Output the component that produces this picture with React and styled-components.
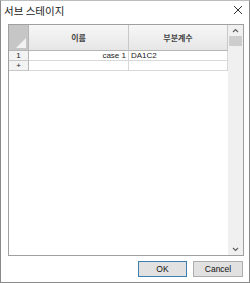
import React from 'react';
import styled, { createGlobalStyle } from 'styled-components';

const Global = createGlobalStyle`
  html, body { margin: 0; padding: 0; background: #fff; }
  body { font-family: "Noto Sans CJK KR", "Noto Sans", sans-serif; }
`;

const Dialog = styled.div`
  width: 250px;
  height: 283px;
  box-sizing: border-box;
  border: 1px solid #8a8a8a;
  border-top-color: #bdbdbd;
  display: flex;
  flex-direction: column;
  background: #fff;
`;

const TitleBar = styled.div`
  height: 20px;
  display: flex;
  align-items: center;
  justify-content: space-between;
  padding: 0 6px 0 3px;
  font-size: 10.5px;
  color: #222;
`;

const Body = styled.div`
  flex: 1;
  display: flex;
  flex-direction: column;
  padding: 5px 5px 5px 7px;
`;

const GridBox = styled.div`
  height: 230px;
  border: 1px solid #a0a0a0;
  display: flex;
  background: #fff;
`;

const Table = styled.div`
  flex: 1;
  display: flex;
  flex-direction: column;
`;

const Row = styled.div`
  display: grid;
  grid-template-columns: 20px 100px 1fr;
  height: ${p => p.$h}px;
`;

const HeadCell = styled.div`
  display: flex;
  align-items: center;
  justify-content: center;
  background: linear-gradient(#f7f7f7, #e6e6e6);
  border-right: 1px solid #c8c8c8;
  border-bottom: 1px solid #b5b5b5;
  font-size: 8px;
  font-weight: bold;
  color: #444;
  position: relative;
`;

const Corner = styled(HeadCell)`
  background: #c6c6c6;
  border-right: 1px solid #b5b5b5;
`;

const Tri = styled.div`
  position: absolute;
  right: 2px;
  bottom: 2px;
  width: 0;
  height: 0;
  border-left: 10px solid transparent;
  border-bottom: 10px solid #f2f2f2;
`;

const Cell = styled.div`
  display: flex;
  align-items: center;
  justify-content: ${p => p.$align || 'flex-start'};
  padding: 0 2px;
  border-right: 1px solid #d8d8d8;
  border-bottom: 1px solid #d8d8d8;
  font-family: "Liberation Sans", Arial, sans-serif;
  font-size: 8px;
  color: #222;
`;

const RowHead = styled(Cell)`
  justify-content: center;
  background: #f3f3f3;
  border-right: 1px solid #b5b5b5;
  border-bottom: 1px solid #c8c8c8;
  padding: 0;
`;

const Scroll = styled.div`
  width: 15px;
  background: #f0f0f0;
  display: flex;
  flex-direction: column;
  align-items: center;
`;

const Arrow = styled.div`
  height: 11px;
  display: flex;
  align-items: center;
  justify-content: center;
`;

const Thumb = styled.div`
  width: 13px;
  height: 10px;
  background: #cdcdcd;
`;

const Spacer = styled.div`
  flex: 1;
`;

const Buttons = styled.div`
  display: flex;
  justify-content: flex-end;
  gap: 6px;
  margin-top: 5px;
  padding-right: 1px;
`;

const Button = styled.button`
  width: ${p => p.$w}px;
  height: 16px;
  box-sizing: border-box;
  border: 1px solid ${p => (p.$primary ? '#3c7fb1' : '#adadad')};
  background: #e1e1e1;
  font-family: "Liberation Sans", Arial, sans-serif;
  font-size: 8.5px;
  color: #111;
  padding: 0;
`;

const Chevron = ({ up }) => (
  <svg width="7" height="5" viewBox="0 0 7 5">
    <path d={up ? 'M1 4 L3.5 1.5 L6 4' : 'M1 1 L3.5 3.5 L6 1'} fill="none" stroke="#606060" strokeWidth="1.2" />
  </svg>
);

export default function App() {
  return (
    <>
      <Global />
      <Dialog>
        <TitleBar>
          <span>서브 스테이지</span>
          <svg width="10" height="10" viewBox="0 0 10 10">
            <path d="M1 1 L9 9 M9 1 L1 9" stroke="#333" strokeWidth="1" />
          </svg>
        </TitleBar>
        <Body>
          <GridBox>
            <Table>
              <Row $h={26}>
                <Corner><Tri /></Corner>
                <HeadCell>이름</HeadCell>
                <HeadCell>부분계수</HeadCell>
              </Row>
              <Row $h={10}>
                <RowHead>1</RowHead>
                <Cell $align="flex-end">case 1</Cell>
                <Cell>DA1C2</Cell>
              </Row>
              <Row $h={10}>
                <RowHead>+</RowHead>
                <Cell />
                <Cell />
              </Row>
            </Table>
            <Scroll>
              <Arrow><Chevron up /></Arrow>
              <Thumb />
              <Spacer />
              <Arrow><Chevron /></Arrow>
            </Scroll>
          </GridBox>
          <Buttons>
            <Button $w={49} $primary>OK</Button>
            <Button $w={50}>Cancel</Button>
          </Buttons>
        </Body>
      </Dialog>
    </>
  );
}
